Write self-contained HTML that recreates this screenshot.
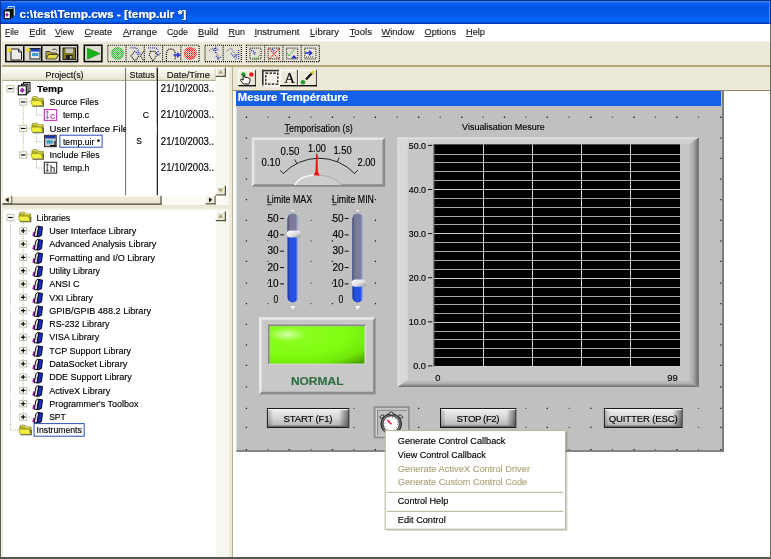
<!DOCTYPE html>
<html>
<head>
<meta charset="utf-8">
<title>c:\test\Temp.cws - [temp.uir *]</title>
<style>
*{box-sizing:border-box;margin:0;padding:0}
html,body{width:771px;height:559px;overflow:hidden;background:#fff}
body{font-family:"Liberation Sans","DejaVu Sans",sans-serif;font-size:9.5px;color:#000;position:relative}
.abs{position:absolute}
#titlebar{left:0;top:0;width:771px;height:23.5px;background:linear-gradient(#002a86 0,#002e90 4%,#3a80ee 6%,#1a6af0 10%,#085cec 17%,#0354e4 38%,#0558ea 62%,#0668f8 86%,#0452de 93%,#003cb6 97%,#0030a0 100%)}
#menubar{left:0;top:23.5px;width:771px;height:17.5px;background:#fff}
#toolbar{left:0;top:41px;width:771px;height:25px;background:#ece9d8;border-top:1px solid #f6f4ea}
#sep1{left:0;top:65.4px;width:771px;height:1.4px;background:#b4a77c}
#toolrow{left:0;top:66.8px;width:771px;height:23.4px;background:#ece9d8}
#leftframe{left:0;top:66.8px;width:233px;height:492px;background:#ece9d8}
#split{left:226px;top:66.8px;width:3px;height:492px;background:#f8f7f0}
#splitl{left:232.2px;top:66.8px;width:1px;height:492px;background:#b8b08c}
#proj{left:2.5px;top:67.4px;width:223.5px;height:137.4px;background:#fff}
#hsplit{left:0;top:204.8px;width:229px;height:4.8px;background:linear-gradient(#e8e5d2 0,#ece9d8 50%,#f6f4ea 100%)}
#lib{left:2.5px;top:209.6px;width:223.5px;height:348px;background:#fff}
#right{left:233px;top:90.2px;width:538px;height:469px;background:#fff;border-top:1px solid #8a8670}
#panel{left:235.6px;top:90.6px;width:488.2px;height:361px;background:#c0c0c0;border-right:2.6px solid #7e7e7e;border-bottom:2px solid #868686;border-left:1px solid #dcdcdc}
#ptitle{left:235.8px;top:90.6px;width:485.4px;height:15.2px;background:#1460e6}
#bl{left:0;top:23.5px;width:1.2px;height:536px;background:#5a5a50}
#blt{left:0;top:0;width:1.2px;height:23.5px;background:#0a2e94}
#brt{left:769.8px;top:0;width:1.2px;height:23.5px;background:#0a2e94}
#brt2{left:768.6px;top:1px;width:1.2px;height:22px;background:#4a8cf0}
#bl2{left:1.2px;top:23.5px;width:1.3px;height:534px;background:#f4f2e8}
#bb{left:0;top:557.2px;width:771px;height:1.8px;background:#585850}
#br{left:769.8px;top:23.5px;width:1.2px;height:536px;background:#6a6a60}
svg{position:absolute;left:0;top:0;will-change:transform}
svg text{font-family:"Liberation Sans","DejaVu Sans",sans-serif;white-space:pre;stroke-width:0.15px}
</style>
</head>
<body>
<div class="abs" id="titlebar"></div>
<div class="abs" id="menubar"></div>
<div class="abs" id="toolbar"></div>
<div class="abs" id="sep1"></div>
<div class="abs" id="toolrow"></div>
<div class="abs" id="leftframe"></div>
<div class="abs" id="split"></div>
<div class="abs" id="splitl"></div>
<div class="abs" id="proj"></div>
<div class="abs" id="hsplit"></div>
<div class="abs" id="lib"></div>
<div class="abs" id="right"></div>
<div class="abs" id="panel"></div>
<div class="abs" id="ptitle"></div>
<svg width="771" height="559" viewBox="0 0 771 559">
<defs>
<filter id="ts" x="-5%" y="-30%" width="110%" height="170%"><feDropShadow dx="0.8" dy="0.8" stdDeviation="0.25" flood-color="#0a2a80" flood-opacity="0.75"/></filter>
<pattern id="chk" x="0.6" y="0.2" width="2" height="2" patternUnits="userSpaceOnUse"><rect width="2" height="2" fill="#ececec"/><rect width="1" height="1" fill="#3a3a3a"/><rect x="1" y="1" width="1" height="1" fill="#3a3a3a"/></pattern>
<pattern id="dgr" width="2" height="2" patternUnits="userSpaceOnUse"><rect width="2" height="2" fill="#b4e0ac"/><rect width="1" height="1" fill="#28b030"/><rect x="1" y="1" width="1" height="1" fill="#28b030"/></pattern>
<pattern id="drd" width="2" height="2" patternUnits="userSpaceOnUse"><rect width="2" height="2" fill="#f0b8b0"/><rect width="1" height="1" fill="#e82020"/><rect x="1" y="1" width="1" height="1" fill="#e82020"/></pattern>
<linearGradient id="hdr" x1="0" x2="0" y1="0" y2="1"><stop offset="0" stop-color="#ffffff"/><stop offset="0.3" stop-color="#f8f7ee"/><stop offset="0.6" stop-color="#f0eee0"/><stop offset="1" stop-color="#e6e2ce"/></linearGradient>
<linearGradient id="trk" x1="0" x2="1" y1="0" y2="0"><stop offset="0" stop-color="#000" stop-opacity="0.45"/><stop offset="0.18" stop-color="#000" stop-opacity="0.05"/><stop offset="0.8" stop-color="#fff" stop-opacity="0"/><stop offset="1" stop-color="#fff" stop-opacity="0.55"/></linearGradient>
<linearGradient id="thm" x1="0" x2="1" y1="0" y2="1"><stop offset="0" stop-color="#ffffff"/><stop offset="0.55" stop-color="#e0e0e4"/><stop offset="1" stop-color="#8c8c96"/></linearGradient>
<radialGradient id="led" cx="0.25" cy="0.2" r="1.05"><stop offset="0" stop-color="#8eff24"/><stop offset="0.55" stop-color="#80fc10"/><stop offset="0.8" stop-color="#70e808"/><stop offset="1" stop-color="#4aa400"/></radialGradient>
<radialGradient id="ledhi"><stop offset="0" stop-color="#fff" stop-opacity="0.6"/><stop offset="1" stop-color="#fff" stop-opacity="0"/></radialGradient>
<linearGradient id="btn" x1="0" x2="0" y1="0" y2="1"><stop offset="0" stop-color="#f0f0f0"/><stop offset="0.5" stop-color="#d6d6d6"/><stop offset="1" stop-color="#b0b0b0"/></linearGradient>
<linearGradient id="btnh" x1="0" x2="1" y1="0" y2="0"><stop offset="0" stop-color="#000" stop-opacity="0.22"/><stop offset="0.07" stop-color="#000" stop-opacity="0"/><stop offset="0.88" stop-color="#000" stop-opacity="0"/><stop offset="1" stop-color="#000" stop-opacity="0.5"/></linearGradient>
<linearGradient id="gl" x1="0" x2="1" y1="0" y2="0"><stop offset="0" stop-color="#f4f4f4"/><stop offset="1" stop-color="#c8c8c8"/></linearGradient>
<linearGradient id="gr" x1="0" x2="1" y1="0" y2="0"><stop offset="0" stop-color="#c6c6c6"/><stop offset="0.5" stop-color="#a8a8a8"/><stop offset="1" stop-color="#626262"/></linearGradient>
<linearGradient id="gb" x1="0" x2="0" y1="0" y2="1"><stop offset="0" stop-color="#c6c6c6"/><stop offset="0.5" stop-color="#b0b0b0"/><stop offset="1" stop-color="#6e6e6e"/></linearGradient>
</defs>
<text x="237.8" y="101" font-size="10.4" font-weight="bold" fill="#fff" stroke="#fff" textLength="110.2" lengthAdjust="spacingAndGlyphs">Mesure Température</text>
<path d="M8 15.5 V6.6 H14.4 V15.5" fill="none" stroke="#e8f0ff" stroke-width="0.9" />
<rect x="6.20" y="8.30" width="7.00" height="9.40" fill="#101010" />
<path d="M6.2 8.5 H12.8" fill="none" stroke="#d8c8c0" stroke-width="0.8" />
<rect x="4.30" y="10.90" width="6.00" height="7.80" fill="#fff" stroke="#000" stroke-width="1.1"/>
<path d="M5.2 14.8 L7 12.6 L8.8 14.8 L7 17 Z" fill="#a018b8" />
<g filter="url(#ts)">
<text x="19.4" y="18.0" font-size="10.8" textLength="166.8" lengthAdjust="spacingAndGlyphs" fill="#fff" stroke="#fff" font-weight="bold">c:\test\Temp.cws - [temp.uir *]</text>
</g>
<text x="5.0" y="34.8" font-size="9.3" textLength="13.7" lengthAdjust="spacingAndGlyphs" fill="#1c1c1c" stroke="#1c1c1c">File</text>
<line x1="5.00" y1="36.50" x2="10.00" y2="36.50" stroke="#222" stroke-width="0.9" />
<text x="29.3" y="34.8" font-size="9.3" textLength="16.2" lengthAdjust="spacingAndGlyphs" fill="#1c1c1c" stroke="#1c1c1c">Edit</text>
<line x1="29.30" y1="36.50" x2="34.80" y2="36.50" stroke="#222" stroke-width="0.9" />
<text x="55.0" y="34.8" font-size="9.3" textLength="19.0" lengthAdjust="spacingAndGlyphs" fill="#1c1c1c" stroke="#1c1c1c">View</text>
<line x1="55.00" y1="36.50" x2="61.00" y2="36.50" stroke="#222" stroke-width="0.9" />
<text x="84.5" y="34.8" font-size="9.3" textLength="27.5" lengthAdjust="spacingAndGlyphs" fill="#1c1c1c" stroke="#1c1c1c">Create</text>
<line x1="84.50" y1="36.50" x2="91.00" y2="36.50" stroke="#222" stroke-width="0.9" />
<text x="123.0" y="34.8" font-size="9.3" textLength="34.0" lengthAdjust="spacingAndGlyphs" fill="#1c1c1c" stroke="#1c1c1c">Arrange</text>
<line x1="123.00" y1="36.50" x2="129.50" y2="36.50" stroke="#222" stroke-width="0.9" />
<text x="167.0" y="34.8" font-size="9.3" textLength="21.0" lengthAdjust="spacingAndGlyphs" fill="#1c1c1c" stroke="#1c1c1c">Code</text>
<line x1="172.51" y1="36.50" x2="177.51" y2="36.50" stroke="#222" stroke-width="0.9" />
<text x="198.0" y="34.8" font-size="9.3" textLength="20.5" lengthAdjust="spacingAndGlyphs" fill="#1c1c1c" stroke="#1c1c1c">Build</text>
<line x1="198.00" y1="36.50" x2="204.00" y2="36.50" stroke="#222" stroke-width="0.9" />
<text x="228.6" y="34.8" font-size="9.3" textLength="16.4" lengthAdjust="spacingAndGlyphs" fill="#1c1c1c" stroke="#1c1c1c">Run</text>
<line x1="228.60" y1="36.50" x2="235.10" y2="36.50" stroke="#222" stroke-width="0.9" />
<text x="254.4" y="34.8" font-size="9.3" textLength="45.0" lengthAdjust="spacingAndGlyphs" fill="#1c1c1c" stroke="#1c1c1c">Instrument</text>
<line x1="254.40" y1="36.50" x2="256.90" y2="36.50" stroke="#222" stroke-width="0.9" />
<text x="310.0" y="34.8" font-size="9.3" textLength="29.0" lengthAdjust="spacingAndGlyphs" fill="#1c1c1c" stroke="#1c1c1c">Library</text>
<line x1="310.00" y1="36.50" x2="315.00" y2="36.50" stroke="#222" stroke-width="0.9" />
<text x="349.5" y="34.8" font-size="9.3" textLength="22.5" lengthAdjust="spacingAndGlyphs" fill="#1c1c1c" stroke="#1c1c1c">Tools</text>
<line x1="349.50" y1="36.50" x2="355.00" y2="36.50" stroke="#222" stroke-width="0.9" />
<text x="381.5" y="34.8" font-size="9.3" textLength="33.0" lengthAdjust="spacingAndGlyphs" fill="#1c1c1c" stroke="#1c1c1c">Window</text>
<line x1="381.50" y1="36.50" x2="390.50" y2="36.50" stroke="#222" stroke-width="0.9" />
<text x="424.6" y="34.8" font-size="9.3" textLength="31.4" lengthAdjust="spacingAndGlyphs" fill="#1c1c1c" stroke="#1c1c1c">Options</text>
<line x1="424.60" y1="36.50" x2="431.60" y2="36.50" stroke="#222" stroke-width="0.9" />
<text x="466.0" y="34.8" font-size="9.3" textLength="19.0" lengthAdjust="spacingAndGlyphs" fill="#1c1c1c" stroke="#1c1c1c">Help</text>
<line x1="466.00" y1="36.50" x2="472.50" y2="36.50" stroke="#222" stroke-width="0.9" />
<rect x="5.80" y="45.20" width="71.80" height="16.40" fill="#dedbcf" stroke="#000" stroke-width="1.5"/>
<line x1="23.75" y1="45.20" x2="23.75" y2="61.60" stroke="#000" stroke-width="1.5" />
<line x1="41.70" y1="45.20" x2="41.70" y2="61.60" stroke="#000" stroke-width="1.5" />
<line x1="59.65" y1="45.20" x2="59.65" y2="61.60" stroke="#000" stroke-width="1.5" />
<path d="M11 49 H18.5 L21.5 52 V60 H11 Z" fill="#ecebe6" stroke="#222" stroke-width="1" />
<path d="M18.5 49 V52 H21.5" fill="none" stroke="#222" stroke-width="0.9" />
<path d="M9.5 46.5 L10.5 49 L13 50 L10.5 51 L9.5 53.5 L8.5 51 L6.5 50 L8.5 49 Z" fill="#f0d820" />
<rect x="30.00" y="48.50" width="10.00" height="10.50" fill="#e8e8e8" stroke="#222" stroke-width="1"/>
<rect x="30.50" y="49.00" width="9.00" height="2.60" fill="#1840c0" />
<rect x="32.00" y="53.00" width="6.50" height="3.00" fill="#40a0d0" />
<path d="M28 46.5 L29 49 L31.5 50 L29 51 L28 53.5 L27 51 L25 50 L27 49 Z" fill="#f0d820" />
<path d="M46 59 V51.5 H50 L51 53 H56.5 V55" fill="#b8a830" stroke="#333" stroke-width="0.9" />
<path d="M46 59 L48.5 54.5 H58.5 L56 59 Z" fill="#e8d840" stroke="#333" stroke-width="0.9" />
<path d="M52 50 Q55 47.5 57 50.5" fill="none" stroke="#333" stroke-width="0.9" />
<rect x="63.00" y="48.00" width="12.50" height="11.50" fill="#807818" stroke="#222" stroke-width="1"/>
<rect x="65.50" y="48.50" width="7.50" height="4.50" fill="#c8c8c8" />
<rect x="66.00" y="55.00" width="6.50" height="4.50" fill="#202020" />
<rect x="70.00" y="56.00" width="1.60" height="2.60" fill="#c8c8c8" />
<rect x="84.30" y="45.20" width="17.60" height="16.40" fill="#dedbcf" stroke="#000" stroke-width="1.5"/>
<path d="M87.5 48.3 L100 53.6 L87.5 59.2 Z" fill="#18b418" stroke="#0a8a0a" stroke-width="0.6" />
<rect x="107.80" y="45.20" width="91.30" height="16.40" fill="#e6e3d4" stroke="#000" stroke-width="1.1" stroke-dasharray="1 1"/>
<line x1="126.06" y1="45.20" x2="126.06" y2="61.60" stroke="#000" stroke-width="1.1" stroke-dasharray="1 1"/>
<line x1="144.32" y1="45.20" x2="144.32" y2="61.60" stroke="#000" stroke-width="1.1" stroke-dasharray="1 1"/>
<line x1="162.58" y1="45.20" x2="162.58" y2="61.60" stroke="#000" stroke-width="1.1" stroke-dasharray="1 1"/>
<line x1="180.84" y1="45.20" x2="180.84" y2="61.60" stroke="#000" stroke-width="1.1" stroke-dasharray="1 1"/>
<rect x="205.00" y="45.20" width="36.30" height="16.40" fill="#e6e3d4" stroke="#000" stroke-width="1.1" stroke-dasharray="1 1"/>
<line x1="223.15" y1="45.20" x2="223.15" y2="61.60" stroke="#000" stroke-width="1.1" stroke-dasharray="1 1"/>
<rect x="246.40" y="45.20" width="73.00" height="16.40" fill="#e6e3d4" stroke="#000" stroke-width="1.1" stroke-dasharray="1 1"/>
<line x1="264.65" y1="45.20" x2="264.65" y2="61.60" stroke="#000" stroke-width="1.1" stroke-dasharray="1 1"/>
<line x1="282.90" y1="45.20" x2="282.90" y2="61.60" stroke="#000" stroke-width="1.1" stroke-dasharray="1 1"/>
<line x1="301.15" y1="45.20" x2="301.15" y2="61.60" stroke="#000" stroke-width="1.1" stroke-dasharray="1 1"/>
<circle cx="117.6" cy="53.4" r="6.4" fill="url(#dgr)"/>
<circle cx="117.6" cy="53.4" r="3" fill="none" stroke="#d8f0d0" stroke-width="1" stroke-dasharray="1 1"/>
<path d="M130.5 47.8 H135 Q138.4 48.2 138.4 53" fill="none" stroke="#2030d0" stroke-width="1.3" stroke-dasharray="1 1"/>
<path d="M136 52 L138.4 55 L140.8 52" fill="none" stroke="#2030d0" stroke-width="1.3" stroke-dasharray="1 1"/>
<path d="M135 51 L131 56 L135 61 L139 56 M144 51 L140.4 56 L144 61" fill="none" stroke="#111" stroke-width="1.2" stroke-dasharray="1 1"/>
<path d="M148 47.8 H155 Q158.4 48.2 158.4 53" fill="none" stroke="#2030d0" stroke-width="1.3" stroke-dasharray="1 1"/>
<path d="M156 52.4 L158.4 55.4 L160.8 52.4" fill="none" stroke="#2030d0" stroke-width="1.3" stroke-dasharray="1 1"/>
<path d="M150.5 51.4 H155 L157 55 L153 61 L149 55 Z" fill="none" stroke="#111" stroke-width="1.2" stroke-dasharray="1 1"/>
<path d="M166.4 61 V54.4 Q166.4 49 170.8 49 Q175.2 49 175.2 54.4 V60" fill="none" stroke="#111" stroke-width="1.3" stroke-dasharray="1 1"/>
<path d="M173.5 55 H179 M177 52.8 L179.6 55 L177 57.2" fill="none" stroke="#2030d0" stroke-width="1.3" />
<circle cx="190.4" cy="53.4" r="6.5" fill="url(#drd)"/>
<line x1="185.00" y1="52.00" x2="196.00" y2="52.00" stroke="#f4e4dc" stroke-width="1" stroke-dasharray="1.5 1"/>
<line x1="185.00" y1="54.80" x2="196.00" y2="54.80" stroke="#f4e4dc" stroke-width="1" stroke-dasharray="1.5 1"/>
<path d="M209 51 L213 48 L219 57 L217 60.5" fill="none" stroke="#6c6c88" stroke-width="1.3" stroke-dasharray="1 1"/>
<path d="M213 50.6 L215.6 47.4 L218.4 50.6 M215.6 48 V53" fill="none" stroke="#2030d0" stroke-width="1.3" stroke-dasharray="1 1"/>
<path d="M216 56 L218.6 59 L221.4 56" fill="none" stroke="#2030d0" stroke-width="1.2" stroke-dasharray="1 1"/>
<path d="M227 51 L231 48 L237 57 L235 60.5" fill="none" stroke="#6c6c88" stroke-width="1.3" stroke-dasharray="1 1"/>
<path d="M231 53.4 L234.4 57 L238 53.4 M238.6 50 V59" fill="none" stroke="#2030d0" stroke-width="1.3" stroke-dasharray="1 1"/>
<rect x="249.90" y="48.20" width="11.20" height="10.60" fill="none" stroke="#333" stroke-width="1.2" stroke-dasharray="1 1"/>
<rect x="268.20" y="48.20" width="11.20" height="10.60" fill="none" stroke="#333" stroke-width="1.2" stroke-dasharray="1 1"/>
<rect x="286.50" y="48.20" width="11.20" height="10.60" fill="none" stroke="#333" stroke-width="1.2" stroke-dasharray="1 1"/>
<rect x="304.70" y="48.20" width="11.20" height="10.60" fill="none" stroke="#333" stroke-width="1.2" stroke-dasharray="1 1"/>
<path d="M251.4 50 L255.4 53 L253.4 55" fill="none" stroke="#2030d0" stroke-width="1.6" stroke-dasharray="1 1"/>
<path d="M254 57.6 L256 59.6 L260 55" fill="none" stroke="#30a030" stroke-width="1.3" stroke-dasharray="1 1"/>
<path d="M268.4 48 L279.6 60 M279.6 48 L268.4 60" fill="none" stroke="#e02828" stroke-width="1.4" stroke-dasharray="1 1"/>
<path d="M272 49 L275 52" fill="none" stroke="#2030d0" stroke-width="1.6" stroke-dasharray="1 1"/>
<path d="M287 53 L289 56 L294.4 49" fill="none" stroke="#30a030" stroke-width="1.3" stroke-dasharray="1 1"/>
<path d="M291 58.4 L294 55 L297 58.4 Z" fill="#2030d0" />
<path d="M305 53 H311 M309 50.8 L311.6 53 L309 55.2" fill="none" stroke="#2030d0" stroke-width="1.5" />
<path d="M306 57 H313" fill="none" stroke="#333" stroke-width="1" stroke-dasharray="1 1"/>
<rect x="2.00" y="67.00" width="124.00" height="14.00" fill="url(#hdr)" />
<rect x="2.00" y="79.90" width="124.00" height="1.10" fill="#b4ae94" />
<line x1="125.50" y1="68.50" x2="125.50" y2="79.50" stroke="#c2bca2" stroke-width="1" />
<text x="45.5" y="77.6" font-size="9.5" textLength="38.1" lengthAdjust="spacingAndGlyphs" fill="#111" stroke="#111">Project(s)</text>
<rect x="126.00" y="67.00" width="31.40" height="14.00" fill="url(#hdr)" />
<rect x="126.00" y="79.90" width="31.40" height="1.10" fill="#b4ae94" />
<line x1="156.90" y1="68.50" x2="156.90" y2="79.50" stroke="#c2bca2" stroke-width="1" />
<text x="129.6" y="77.6" font-size="9.5" textLength="25.0" lengthAdjust="spacingAndGlyphs" fill="#111" stroke="#111">Status</text>
<rect x="157.40" y="67.00" width="58.40" height="14.00" fill="url(#hdr)" />
<rect x="157.40" y="79.90" width="58.40" height="1.10" fill="#b4ae94" />
<line x1="215.30" y1="68.50" x2="215.30" y2="79.50" stroke="#c2bca2" stroke-width="1" />
<text x="166.7" y="77.6" font-size="9.5" textLength="43.3" lengthAdjust="spacingAndGlyphs" fill="#111" stroke="#111">Date/Time</text>
<line x1="125.60" y1="67.60" x2="125.60" y2="195.60" stroke="#6a6a6a" stroke-width="1" />
<line x1="157.30" y1="67.60" x2="157.30" y2="195.60" stroke="#000" stroke-width="1.1" />
<rect x="215.80" y="67.60" width="10.20" height="128.00" fill="#f7f6ef" />
<rect x="215.80" y="67.60" width="10.20" height="9.40" fill="#ece9d8" />
<rect x="215.80" y="67.60" width="10.20" height="1.00" fill="#fff" />
<rect x="215.80" y="67.60" width="1.00" height="9.40" fill="#fff" />
<rect x="215.80" y="75.80" width="10.20" height="1.20" fill="#55503e" />
<rect x="224.80" y="67.60" width="1.20" height="9.40" fill="#55503e" />
<path d="M218.0 73.6 L220.6 70.0 L223.2 73.6 Z" fill="#a8a078" />
<rect x="215.80" y="185.80" width="10.20" height="9.80" fill="#ece9d8" />
<rect x="215.80" y="185.80" width="10.20" height="1.00" fill="#fff" />
<rect x="215.80" y="185.80" width="1.00" height="9.80" fill="#fff" />
<rect x="215.80" y="194.40" width="10.20" height="1.20" fill="#55503e" />
<rect x="224.80" y="185.80" width="1.20" height="9.80" fill="#55503e" />
<path d="M218.0 188.8 L220.6 192.4 L223.2 188.8 Z" fill="#a8a078" />
<rect x="2.50" y="195.80" width="213.30" height="8.60" fill="#fbfaf5" />
<rect x="2.50" y="195.80" width="10.00" height="8.60" fill="#ece9d8" />
<rect x="2.50" y="195.80" width="10.00" height="1.00" fill="#fff" />
<rect x="2.50" y="195.80" width="1.00" height="8.60" fill="#fff" />
<rect x="2.50" y="203.20" width="10.00" height="1.20" fill="#55503e" />
<rect x="11.30" y="195.80" width="1.20" height="8.60" fill="#55503e" />
<path d="M8.6 197.4 L5.4 199.8 L8.6 202.20000000000002 Z" fill="#000" />
<rect x="205.60" y="195.80" width="10.20" height="8.60" fill="#ece9d8" />
<rect x="205.60" y="195.80" width="10.20" height="1.00" fill="#fff" />
<rect x="205.60" y="195.80" width="1.00" height="8.60" fill="#fff" />
<rect x="205.60" y="203.20" width="10.20" height="1.20" fill="#55503e" />
<rect x="214.60" y="195.80" width="1.20" height="8.60" fill="#55503e" />
<path d="M208.99999999999997 197.4 L212.2 199.8 L208.99999999999997 202.20000000000002 Z" fill="#000" />
<rect x="12.60" y="195.80" width="149.00" height="8.60" fill="#ece9d8" />
<rect x="12.60" y="195.80" width="149.00" height="1.00" fill="#fff" />
<rect x="12.60" y="203.20" width="149.00" height="1.20" fill="#a09c88" />
<rect x="160.40" y="195.80" width="1.20" height="8.60" fill="#55503e" />
<rect x="215.80" y="195.80" width="10.20" height="8.60" fill="#fbfaf5" />
<rect x="2.50" y="203.70" width="159.10" height="1.10" fill="#5c5642" />
<line x1="14.00" y1="88.60" x2="18.00" y2="88.60" stroke="#b0a888" stroke-width="0.9" stroke-dasharray="1 1.2"/>
<line x1="23.30" y1="105.65" x2="23.30" y2="151.65" stroke="#b0a888" stroke-width="0.9" stroke-dasharray="1 1.2"/>
<line x1="27.00" y1="101.85" x2="30.50" y2="101.85" stroke="#b0a888" stroke-width="0.9" stroke-dasharray="1 1.2"/>
<line x1="36.50" y1="107.15" x2="36.50" y2="115.10" stroke="#b0a888" stroke-width="0.9" stroke-dasharray="1 1.2"/>
<line x1="36.50" y1="115.10" x2="43.50" y2="115.10" stroke="#b0a888" stroke-width="0.9" stroke-dasharray="1 1.2"/>
<line x1="27.00" y1="128.35" x2="30.50" y2="128.35" stroke="#b0a888" stroke-width="0.9" stroke-dasharray="1 1.2"/>
<line x1="36.50" y1="133.65" x2="36.50" y2="141.60" stroke="#b0a888" stroke-width="0.9" stroke-dasharray="1 1.2"/>
<line x1="36.50" y1="141.60" x2="43.50" y2="141.60" stroke="#b0a888" stroke-width="0.9" stroke-dasharray="1 1.2"/>
<line x1="27.00" y1="154.85" x2="30.50" y2="154.85" stroke="#b0a888" stroke-width="0.9" stroke-dasharray="1 1.2"/>
<line x1="36.50" y1="160.15" x2="36.50" y2="168.10" stroke="#b0a888" stroke-width="0.9" stroke-dasharray="1 1.2"/>
<line x1="36.50" y1="168.10" x2="43.50" y2="168.10" stroke="#b0a888" stroke-width="0.9" stroke-dasharray="1 1.2"/>
<rect x="6.90" y="85.60" width="6.80" height="6.30" fill="#fff" stroke="#c4c0a8" stroke-width="1"/>
<line x1="8.10" y1="88.70" x2="12.50" y2="88.70" stroke="#000" stroke-width="1.2" />
<rect x="23.50" y="82.60" width="6.50" height="9.00" fill="#fff" stroke="#000" stroke-width="1"/>
<rect x="21.50" y="84.20" width="6.50" height="9.00" fill="#fff" stroke="#000" stroke-width="1"/>
<rect x="18.30" y="85.80" width="8.00" height="9.00" fill="#fff" stroke="#000" stroke-width="1.1"/>
<path d="M19.8 90.3 L22.3 87.6 L24.8 90.3 L22.3 93 Z" fill="#a020c0" />
<text x="37.0" y="91.9" font-size="9.8" textLength="26.2" lengthAdjust="spacingAndGlyphs" stroke="#000" font-weight="bold">Temp</text>
<text x="160.8" y="91.7" font-size="10" textLength="53.4" lengthAdjust="spacingAndGlyphs" stroke="#000">21/10/2003..</text>
<rect x="19.80" y="98.85" width="6.80" height="6.30" fill="#fff" stroke="#c4c0a8" stroke-width="1"/>
<line x1="21.00" y1="101.95" x2="25.40" y2="101.95" stroke="#000" stroke-width="1.2" />
<path d="M32.0 104.35000000000001 V97.75000000000001 L33.0 96.65 H37.0 L38.0 98.35000000000001 H43.2 V104.35000000000001 Z" fill="#a8a428" stroke="#7c7818" stroke-width="0.7" />
<path d="M32.800000000000004 97.65 H36.800000000000004 L37.800000000000004 99.15 H42.400000000000006" fill="none" stroke="#e8e460" stroke-width="1" />
<path d="M30.900000000000002 100.65 H41.0 L42.8 105.75000000000001 H32.4 Z" fill="#f0f040" stroke="#9c981c" stroke-width="0.6" />
<path d="M32.6 106.25000000000001 H43.400000000000006 V101.35000000000001" fill="none" stroke="#5c5c44" stroke-width="1.1" />
<text x="49.6" y="105.2" font-size="9.5" textLength="49.0" lengthAdjust="spacingAndGlyphs" stroke="#000">Source Files</text>
<rect x="19.80" y="125.35" width="6.80" height="6.30" fill="#fff" stroke="#c4c0a8" stroke-width="1"/>
<line x1="21.00" y1="128.45" x2="25.40" y2="128.45" stroke="#000" stroke-width="1.2" />
<path d="M32.0 130.85000000000002 V124.25000000000001 L33.0 123.15 H37.0 L38.0 124.85000000000001 H43.2 V130.85000000000002 Z" fill="#a8a428" stroke="#7c7818" stroke-width="0.7" />
<path d="M32.800000000000004 124.15 H36.800000000000004 L37.800000000000004 125.65 H42.400000000000006" fill="none" stroke="#e8e460" stroke-width="1" />
<path d="M30.900000000000002 127.15 H41.0 L42.8 132.25 H32.4 Z" fill="#f0f040" stroke="#9c981c" stroke-width="0.6" />
<path d="M32.6 132.75 H43.400000000000006 V127.85000000000001" fill="none" stroke="#5c5c44" stroke-width="1.1" />
<text x="49.6" y="131.7" font-size="9.5" textLength="83.4" lengthAdjust="spacingAndGlyphs" stroke="#000">User Interface Files</text>
<rect x="19.80" y="151.85" width="6.80" height="6.30" fill="#fff" stroke="#c4c0a8" stroke-width="1"/>
<line x1="21.00" y1="154.95" x2="25.40" y2="154.95" stroke="#000" stroke-width="1.2" />
<path d="M32.0 157.35 V150.75 L33.0 149.65 H37.0 L38.0 151.35 H43.2 V157.35 Z" fill="#a8a428" stroke="#7c7818" stroke-width="0.7" />
<path d="M32.800000000000004 150.65 H36.800000000000004 L37.800000000000004 152.15 H42.400000000000006" fill="none" stroke="#e8e460" stroke-width="1" />
<path d="M30.900000000000002 153.65 H41.0 L42.8 158.75 H32.4 Z" fill="#f0f040" stroke="#9c981c" stroke-width="0.6" />
<path d="M32.6 159.25 H43.400000000000006 V154.35" fill="none" stroke="#5c5c44" stroke-width="1.1" />
<text x="49.6" y="158.2" font-size="9.5" textLength="50.2" lengthAdjust="spacingAndGlyphs" stroke="#000">Include Files</text>
<rect x="44.30" y="109.60" width="12.40" height="10.80" fill="#fff" stroke="#c030c0" stroke-width="1.1"/>
<path d="M47.3 111 V118.6 M45.8 112.6 L47.3 111 L48.8 112.6 M45.8 117 L47.3 118.6 L48.8 117" fill="none" stroke="#c030c0" stroke-width="0.9" />
<text x="50.0" y="118.8" font-size="9" textLength="5.2" lengthAdjust="spacingAndGlyphs" fill="#c030c0" stroke="#c030c0">c</text>
<text x="62.9" y="118.4" font-size="9.5" textLength="26.3" lengthAdjust="spacingAndGlyphs" stroke="#000">temp.c</text>
<text x="142.8" y="117.6" font-size="9.3" textLength="6.2" lengthAdjust="spacingAndGlyphs" stroke="#000">C</text>
<text x="160.8" y="118.2" font-size="10" textLength="53.4" lengthAdjust="spacingAndGlyphs" stroke="#000">21/10/2003..</text>
<rect x="44.60" y="135.30" width="11.60" height="11.40" fill="#c8c8c8" stroke="#222" stroke-width="1"/>
<rect x="45.20" y="135.80" width="10.40" height="2.60" fill="#1838a8" />
<rect x="46.60" y="140.30" width="6.00" height="3.20" fill="#38a0c8" />
<path d="M55 141 V145.6 H50" fill="none" stroke="#000" stroke-width="1.1" />
<rect x="59.90" y="135.20" width="42.20" height="12.00" fill="#fff" stroke="#2a50b8" stroke-width="1"/>
<text x="62.9" y="144.9" font-size="9.5" textLength="37.2" lengthAdjust="spacingAndGlyphs" stroke="#000">temp.uir *</text>
<text x="136.2" y="144.1" font-size="9.3" textLength="5.6" lengthAdjust="spacingAndGlyphs" stroke="#000">S</text>
<text x="160.8" y="144.7" font-size="10" textLength="53.4" lengthAdjust="spacingAndGlyphs" stroke="#000">21/10/2003..</text>
<rect x="44.30" y="162.30" width="12.40" height="10.80" fill="#fff" stroke="#333" stroke-width="1.1"/>
<path d="M47.3 163.8 V171.4 M45.8 165.4 L47.3 163.8 L48.8 165.4 M45.8 169.8 L47.3 171.4 L48.8 169.8" fill="none" stroke="#333" stroke-width="0.9" />
<text x="50.0" y="171.6" font-size="9" textLength="5.2" lengthAdjust="spacingAndGlyphs" fill="#222" stroke="#222">h</text>
<text x="62.9" y="171.4" font-size="9.5" textLength="26.3" lengthAdjust="spacingAndGlyphs" stroke="#000">temp.h</text>
<text x="160.8" y="171.2" font-size="10" textLength="53.4" lengthAdjust="spacingAndGlyphs" stroke="#000">21/10/2003..</text>
<rect x="126.20" y="125.00" width="30.40" height="10.00" fill="#fff" />
<rect x="215.80" y="209.60" width="10.20" height="347.60" fill="#f7f6ef" />
<rect x="215.80" y="211.60" width="10.20" height="9.60" fill="#ece9d8" />
<rect x="215.80" y="211.60" width="10.20" height="1.00" fill="#fff" />
<rect x="215.80" y="211.60" width="1.00" height="9.60" fill="#fff" />
<rect x="215.80" y="220.00" width="10.20" height="1.20" fill="#55503e" />
<rect x="224.80" y="211.60" width="1.20" height="9.60" fill="#55503e" />
<path d="M218.0 217.7 L220.6 214.1 L223.2 217.7 Z" fill="#a8a078" />
<line x1="10.40" y1="221.70" x2="10.40" y2="430.20" stroke="#b0a888" stroke-width="0.9" stroke-dasharray="1 1.2"/>
<line x1="10.40" y1="430.20" x2="18.00" y2="430.20" stroke="#b0a888" stroke-width="0.9" stroke-dasharray="1 1.2"/>
<rect x="7.00" y="214.40" width="6.80" height="6.30" fill="#fff" stroke="#c4c0a8" stroke-width="1"/>
<line x1="8.20" y1="217.50" x2="12.60" y2="217.50" stroke="#000" stroke-width="1.2" />
<path d="M19.4 219.89999999999998 V213.29999999999998 L20.4 212.2 H24.4 L25.4 213.89999999999998 H30.6 V219.89999999999998 Z" fill="#a8a428" stroke="#7c7818" stroke-width="0.7" />
<path d="M20.2 213.2 H24.2 L25.2 214.7 H29.8" fill="none" stroke="#e8e460" stroke-width="1" />
<path d="M18.3 216.2 H28.4 L30.2 221.29999999999998 H19.8 Z" fill="#f0f040" stroke="#9c981c" stroke-width="0.6" />
<path d="M20 221.79999999999998 H30.8 V216.89999999999998" fill="none" stroke="#5c5c44" stroke-width="1.1" />
<text x="36.6" y="220.7" font-size="9.5" textLength="33.6" lengthAdjust="spacingAndGlyphs" stroke="#000">Libraries</text>
<line x1="23.20" y1="222.70" x2="23.20" y2="416.90" stroke="#b0a888" stroke-width="0.9" stroke-dasharray="1 1.2"/>
<line x1="26.50" y1="230.70" x2="31.00" y2="230.70" stroke="#b0a888" stroke-width="0.9" stroke-dasharray="1 1.2"/>
<rect x="19.80" y="227.70" width="6.80" height="6.30" fill="#fff" stroke="#c4c0a8" stroke-width="1"/>
<line x1="21.00" y1="230.80" x2="25.40" y2="230.80" stroke="#000" stroke-width="1.2" />
<line x1="23.20" y1="228.60" x2="23.20" y2="233.00" stroke="#000" stroke-width="1.2" />
<path d="M32.2 235.7 L33.6 231.5 L35.2 232.1 L34.4 236.3 Z" fill="#a818b8" />
<path d="M34.2 236.4 L35.9 227.5 L38 225.9 L38.9 226.5 L37.1 236.6 Z" fill="#dcdcdc" stroke="#000" stroke-width="0.9" />
<path d="M37.1 236.6 L38.9 226.4 L42.5 226.9 L41.5 235.5 L38.7 236.8 Z" fill="#1c2cc4" stroke="#000" stroke-width="0.9" />
<text x="49.2" y="234.0" font-size="9.5" textLength="87.1" lengthAdjust="spacingAndGlyphs" stroke="#000">User Interface Library</text>
<line x1="26.50" y1="244.00" x2="31.00" y2="244.00" stroke="#b0a888" stroke-width="0.9" stroke-dasharray="1 1.2"/>
<rect x="19.80" y="241.00" width="6.80" height="6.30" fill="#fff" stroke="#c4c0a8" stroke-width="1"/>
<line x1="21.00" y1="244.10" x2="25.40" y2="244.10" stroke="#000" stroke-width="1.2" />
<line x1="23.20" y1="241.90" x2="23.20" y2="246.30" stroke="#000" stroke-width="1.2" />
<path d="M32.2 248.99999999999997 L33.6 244.79999999999998 L35.2 245.39999999999998 L34.4 249.6 Z" fill="#a818b8" />
<path d="M34.2 249.7 L35.9 240.79999999999998 L38 239.2 L38.9 239.79999999999998 L37.1 249.89999999999998 Z" fill="#dcdcdc" stroke="#000" stroke-width="0.9" />
<path d="M37.1 249.89999999999998 L38.9 239.7 L42.5 240.2 L41.5 248.79999999999998 L38.7 250.1 Z" fill="#1c2cc4" stroke="#000" stroke-width="0.9" />
<text x="49.2" y="247.3" font-size="9.5" textLength="107.2" lengthAdjust="spacingAndGlyphs" stroke="#000">Advanced Analysis Library</text>
<line x1="26.50" y1="257.30" x2="31.00" y2="257.30" stroke="#b0a888" stroke-width="0.9" stroke-dasharray="1 1.2"/>
<rect x="19.80" y="254.30" width="6.80" height="6.30" fill="#fff" stroke="#c4c0a8" stroke-width="1"/>
<line x1="21.00" y1="257.40" x2="25.40" y2="257.40" stroke="#000" stroke-width="1.2" />
<line x1="23.20" y1="255.20" x2="23.20" y2="259.60" stroke="#000" stroke-width="1.2" />
<path d="M32.2 262.3 L33.6 258.1 L35.2 258.70000000000005 L34.4 262.90000000000003 Z" fill="#a818b8" />
<path d="M34.2 263.0 L35.9 254.10000000000002 L38 252.50000000000003 L38.9 253.10000000000002 L37.1 263.20000000000005 Z" fill="#dcdcdc" stroke="#000" stroke-width="0.9" />
<path d="M37.1 263.20000000000005 L38.9 253.00000000000003 L42.5 253.50000000000003 L41.5 262.1 L38.7 263.40000000000003 Z" fill="#1c2cc4" stroke="#000" stroke-width="0.9" />
<text x="49.2" y="260.6" font-size="9.5" textLength="105.8" lengthAdjust="spacingAndGlyphs" stroke="#000">Formatting and I/O Library</text>
<line x1="26.50" y1="270.60" x2="31.00" y2="270.60" stroke="#b0a888" stroke-width="0.9" stroke-dasharray="1 1.2"/>
<rect x="19.80" y="267.60" width="6.80" height="6.30" fill="#fff" stroke="#c4c0a8" stroke-width="1"/>
<line x1="21.00" y1="270.70" x2="25.40" y2="270.70" stroke="#000" stroke-width="1.2" />
<line x1="23.20" y1="268.50" x2="23.20" y2="272.90" stroke="#000" stroke-width="1.2" />
<path d="M32.2 275.59999999999997 L33.6 271.4 L35.2 272.0 L34.4 276.2 Z" fill="#a818b8" />
<path d="M34.2 276.29999999999995 L35.9 267.4 L38 265.79999999999995 L38.9 266.4 L37.1 276.5 Z" fill="#dcdcdc" stroke="#000" stroke-width="0.9" />
<path d="M37.1 276.5 L38.9 266.29999999999995 L42.5 266.79999999999995 L41.5 275.4 L38.7 276.7 Z" fill="#1c2cc4" stroke="#000" stroke-width="0.9" />
<text x="49.2" y="273.9" font-size="9.5" textLength="50.8" lengthAdjust="spacingAndGlyphs" stroke="#000">Utility Library</text>
<line x1="26.50" y1="283.90" x2="31.00" y2="283.90" stroke="#b0a888" stroke-width="0.9" stroke-dasharray="1 1.2"/>
<rect x="19.80" y="280.90" width="6.80" height="6.30" fill="#fff" stroke="#c4c0a8" stroke-width="1"/>
<line x1="21.00" y1="284.00" x2="25.40" y2="284.00" stroke="#000" stroke-width="1.2" />
<line x1="23.20" y1="281.80" x2="23.20" y2="286.20" stroke="#000" stroke-width="1.2" />
<path d="M32.2 288.9 L33.6 284.7 L35.2 285.3 L34.4 289.5 Z" fill="#a818b8" />
<path d="M34.2 289.59999999999997 L35.9 280.7 L38 279.09999999999997 L38.9 279.7 L37.1 289.8 Z" fill="#dcdcdc" stroke="#000" stroke-width="0.9" />
<path d="M37.1 289.8 L38.9 279.59999999999997 L42.5 280.09999999999997 L41.5 288.7 L38.7 290.0 Z" fill="#1c2cc4" stroke="#000" stroke-width="0.9" />
<text x="49.2" y="287.2" font-size="9.5" textLength="30.4" lengthAdjust="spacingAndGlyphs" stroke="#000">ANSI C</text>
<line x1="26.50" y1="297.20" x2="31.00" y2="297.20" stroke="#b0a888" stroke-width="0.9" stroke-dasharray="1 1.2"/>
<rect x="19.80" y="294.20" width="6.80" height="6.30" fill="#fff" stroke="#c4c0a8" stroke-width="1"/>
<line x1="21.00" y1="297.30" x2="25.40" y2="297.30" stroke="#000" stroke-width="1.2" />
<line x1="23.20" y1="295.10" x2="23.20" y2="299.50" stroke="#000" stroke-width="1.2" />
<path d="M32.2 302.2 L33.6 298.0 L35.2 298.6 L34.4 302.8 Z" fill="#a818b8" />
<path d="M34.2 302.9 L35.9 294.0 L38 292.4 L38.9 293.0 L37.1 303.1 Z" fill="#dcdcdc" stroke="#000" stroke-width="0.9" />
<path d="M37.1 303.1 L38.9 292.9 L42.5 293.4 L41.5 302.0 L38.7 303.3 Z" fill="#1c2cc4" stroke="#000" stroke-width="0.9" />
<text x="49.2" y="300.5" font-size="9.5" textLength="43.8" lengthAdjust="spacingAndGlyphs" stroke="#000">VXI Library</text>
<line x1="26.50" y1="310.50" x2="31.00" y2="310.50" stroke="#b0a888" stroke-width="0.9" stroke-dasharray="1 1.2"/>
<rect x="19.80" y="307.50" width="6.80" height="6.30" fill="#fff" stroke="#c4c0a8" stroke-width="1"/>
<line x1="21.00" y1="310.60" x2="25.40" y2="310.60" stroke="#000" stroke-width="1.2" />
<line x1="23.20" y1="308.40" x2="23.20" y2="312.80" stroke="#000" stroke-width="1.2" />
<path d="M32.2 315.5 L33.6 311.3 L35.2 311.90000000000003 L34.4 316.1 Z" fill="#a818b8" />
<path d="M34.2 316.2 L35.9 307.3 L38 305.7 L38.9 306.3 L37.1 316.40000000000003 Z" fill="#dcdcdc" stroke="#000" stroke-width="0.9" />
<path d="M37.1 316.40000000000003 L38.9 306.2 L42.5 306.7 L41.5 315.3 L38.7 316.6 Z" fill="#1c2cc4" stroke="#000" stroke-width="0.9" />
<text x="49.2" y="313.8" font-size="9.5" textLength="101.8" lengthAdjust="spacingAndGlyphs" stroke="#000">GPIB/GPIB 488.2 Library</text>
<line x1="26.50" y1="323.80" x2="31.00" y2="323.80" stroke="#b0a888" stroke-width="0.9" stroke-dasharray="1 1.2"/>
<rect x="19.80" y="320.80" width="6.80" height="6.30" fill="#fff" stroke="#c4c0a8" stroke-width="1"/>
<line x1="21.00" y1="323.90" x2="25.40" y2="323.90" stroke="#000" stroke-width="1.2" />
<line x1="23.20" y1="321.70" x2="23.20" y2="326.10" stroke="#000" stroke-width="1.2" />
<path d="M32.2 328.8 L33.6 324.6 L35.2 325.20000000000005 L34.4 329.40000000000003 Z" fill="#a818b8" />
<path d="M34.2 329.5 L35.9 320.6 L38 319.0 L38.9 319.6 L37.1 329.70000000000005 Z" fill="#dcdcdc" stroke="#000" stroke-width="0.9" />
<path d="M37.1 329.70000000000005 L38.9 319.5 L42.5 320.0 L41.5 328.6 L38.7 329.90000000000003 Z" fill="#1c2cc4" stroke="#000" stroke-width="0.9" />
<text x="49.2" y="327.1" font-size="9.5" textLength="60.3" lengthAdjust="spacingAndGlyphs" stroke="#000">RS-232 Library</text>
<line x1="26.50" y1="337.10" x2="31.00" y2="337.10" stroke="#b0a888" stroke-width="0.9" stroke-dasharray="1 1.2"/>
<rect x="19.80" y="334.10" width="6.80" height="6.30" fill="#fff" stroke="#c4c0a8" stroke-width="1"/>
<line x1="21.00" y1="337.20" x2="25.40" y2="337.20" stroke="#000" stroke-width="1.2" />
<line x1="23.20" y1="335.00" x2="23.20" y2="339.40" stroke="#000" stroke-width="1.2" />
<path d="M32.2 342.09999999999997 L33.6 337.9 L35.2 338.5 L34.4 342.7 Z" fill="#a818b8" />
<path d="M34.2 342.79999999999995 L35.9 333.9 L38 332.29999999999995 L38.9 332.9 L37.1 343.0 Z" fill="#dcdcdc" stroke="#000" stroke-width="0.9" />
<path d="M37.1 343.0 L38.9 332.79999999999995 L42.5 333.29999999999995 L41.5 341.9 L38.7 343.2 Z" fill="#1c2cc4" stroke="#000" stroke-width="0.9" />
<text x="49.2" y="340.4" font-size="9.5" textLength="50.0" lengthAdjust="spacingAndGlyphs" stroke="#000">VISA Library</text>
<line x1="26.50" y1="350.40" x2="31.00" y2="350.40" stroke="#b0a888" stroke-width="0.9" stroke-dasharray="1 1.2"/>
<rect x="19.80" y="347.40" width="6.80" height="6.30" fill="#fff" stroke="#c4c0a8" stroke-width="1"/>
<line x1="21.00" y1="350.50" x2="25.40" y2="350.50" stroke="#000" stroke-width="1.2" />
<line x1="23.20" y1="348.30" x2="23.20" y2="352.70" stroke="#000" stroke-width="1.2" />
<path d="M32.2 355.4 L33.6 351.2 L35.2 351.8 L34.4 356.0 Z" fill="#a818b8" />
<path d="M34.2 356.09999999999997 L35.9 347.2 L38 345.59999999999997 L38.9 346.2 L37.1 356.3 Z" fill="#dcdcdc" stroke="#000" stroke-width="0.9" />
<path d="M37.1 356.3 L38.9 346.09999999999997 L42.5 346.59999999999997 L41.5 355.2 L38.7 356.5 Z" fill="#1c2cc4" stroke="#000" stroke-width="0.9" />
<text x="49.2" y="353.7" font-size="9.5" textLength="81.8" lengthAdjust="spacingAndGlyphs" stroke="#000">TCP Support Library</text>
<line x1="26.50" y1="363.70" x2="31.00" y2="363.70" stroke="#b0a888" stroke-width="0.9" stroke-dasharray="1 1.2"/>
<rect x="19.80" y="360.70" width="6.80" height="6.30" fill="#fff" stroke="#c4c0a8" stroke-width="1"/>
<line x1="21.00" y1="363.80" x2="25.40" y2="363.80" stroke="#000" stroke-width="1.2" />
<line x1="23.20" y1="361.60" x2="23.20" y2="366.00" stroke="#000" stroke-width="1.2" />
<path d="M32.2 368.7 L33.6 364.5 L35.2 365.1 L34.4 369.3 Z" fill="#a818b8" />
<path d="M34.2 369.4 L35.9 360.5 L38 358.9 L38.9 359.5 L37.1 369.6 Z" fill="#dcdcdc" stroke="#000" stroke-width="0.9" />
<path d="M37.1 369.6 L38.9 359.4 L42.5 359.9 L41.5 368.5 L38.7 369.8 Z" fill="#1c2cc4" stroke="#000" stroke-width="0.9" />
<text x="49.2" y="367.0" font-size="9.5" textLength="78.2" lengthAdjust="spacingAndGlyphs" stroke="#000">DataSocket Library</text>
<line x1="26.50" y1="377.00" x2="31.00" y2="377.00" stroke="#b0a888" stroke-width="0.9" stroke-dasharray="1 1.2"/>
<rect x="19.80" y="374.00" width="6.80" height="6.30" fill="#fff" stroke="#c4c0a8" stroke-width="1"/>
<line x1="21.00" y1="377.10" x2="25.40" y2="377.10" stroke="#000" stroke-width="1.2" />
<line x1="23.20" y1="374.90" x2="23.20" y2="379.30" stroke="#000" stroke-width="1.2" />
<path d="M32.2 382.0 L33.6 377.8 L35.2 378.40000000000003 L34.4 382.6 Z" fill="#a818b8" />
<path d="M34.2 382.7 L35.9 373.8 L38 372.2 L38.9 372.8 L37.1 382.90000000000003 Z" fill="#dcdcdc" stroke="#000" stroke-width="0.9" />
<path d="M37.1 382.90000000000003 L38.9 372.7 L42.5 373.2 L41.5 381.8 L38.7 383.1 Z" fill="#1c2cc4" stroke="#000" stroke-width="0.9" />
<text x="49.2" y="380.3" font-size="9.5" textLength="82.6" lengthAdjust="spacingAndGlyphs" stroke="#000">DDE Support Library</text>
<line x1="26.50" y1="390.30" x2="31.00" y2="390.30" stroke="#b0a888" stroke-width="0.9" stroke-dasharray="1 1.2"/>
<rect x="19.80" y="387.30" width="6.80" height="6.30" fill="#fff" stroke="#c4c0a8" stroke-width="1"/>
<line x1="21.00" y1="390.40" x2="25.40" y2="390.40" stroke="#000" stroke-width="1.2" />
<line x1="23.20" y1="388.20" x2="23.20" y2="392.60" stroke="#000" stroke-width="1.2" />
<path d="M32.2 395.3 L33.6 391.1 L35.2 391.70000000000005 L34.4 395.90000000000003 Z" fill="#a818b8" />
<path d="M34.2 396.0 L35.9 387.1 L38 385.5 L38.9 386.1 L37.1 396.20000000000005 Z" fill="#dcdcdc" stroke="#000" stroke-width="0.9" />
<path d="M37.1 396.20000000000005 L38.9 386.0 L42.5 386.5 L41.5 395.1 L38.7 396.40000000000003 Z" fill="#1c2cc4" stroke="#000" stroke-width="0.9" />
<text x="49.2" y="393.6" font-size="9.5" textLength="61.2" lengthAdjust="spacingAndGlyphs" stroke="#000">ActiveX Library</text>
<line x1="26.50" y1="403.60" x2="31.00" y2="403.60" stroke="#b0a888" stroke-width="0.9" stroke-dasharray="1 1.2"/>
<rect x="19.80" y="400.60" width="6.80" height="6.30" fill="#fff" stroke="#c4c0a8" stroke-width="1"/>
<line x1="21.00" y1="403.70" x2="25.40" y2="403.70" stroke="#000" stroke-width="1.2" />
<line x1="23.20" y1="401.50" x2="23.20" y2="405.90" stroke="#000" stroke-width="1.2" />
<path d="M32.2 408.59999999999997 L33.6 404.4 L35.2 405.0 L34.4 409.2 Z" fill="#a818b8" />
<path d="M34.2 409.29999999999995 L35.9 400.4 L38 398.79999999999995 L38.9 399.4 L37.1 409.5 Z" fill="#dcdcdc" stroke="#000" stroke-width="0.9" />
<path d="M37.1 409.5 L38.9 399.29999999999995 L42.5 399.79999999999995 L41.5 408.4 L38.7 409.7 Z" fill="#1c2cc4" stroke="#000" stroke-width="0.9" />
<text x="49.2" y="406.9" font-size="9.5" textLength="89.3" lengthAdjust="spacingAndGlyphs" stroke="#000">Programmer's Toolbox</text>
<line x1="26.50" y1="416.90" x2="31.00" y2="416.90" stroke="#b0a888" stroke-width="0.9" stroke-dasharray="1 1.2"/>
<rect x="19.80" y="413.90" width="6.80" height="6.30" fill="#fff" stroke="#c4c0a8" stroke-width="1"/>
<line x1="21.00" y1="417.00" x2="25.40" y2="417.00" stroke="#000" stroke-width="1.2" />
<line x1="23.20" y1="414.80" x2="23.20" y2="419.20" stroke="#000" stroke-width="1.2" />
<path d="M32.2 421.9 L33.6 417.7 L35.2 418.3 L34.4 422.5 Z" fill="#a818b8" />
<path d="M34.2 422.59999999999997 L35.9 413.7 L38 412.09999999999997 L38.9 412.7 L37.1 422.8 Z" fill="#dcdcdc" stroke="#000" stroke-width="0.9" />
<path d="M37.1 422.8 L38.9 412.59999999999997 L42.5 413.09999999999997 L41.5 421.7 L38.7 423.0 Z" fill="#1c2cc4" stroke="#000" stroke-width="0.9" />
<text x="49.2" y="420.2" font-size="9.5" textLength="16.5" lengthAdjust="spacingAndGlyphs" stroke="#000">SPT</text>
<path d="M19.9 432.9 V426.29999999999995 L20.9 425.2 H24.9 L25.9 426.9 H31.1 V432.9 Z" fill="#a8a428" stroke="#7c7818" stroke-width="0.7" />
<path d="M20.7 426.2 H24.7 L25.7 427.7 H30.3" fill="none" stroke="#e8e460" stroke-width="1" />
<path d="M18.8 429.2 H28.9 L30.7 434.29999999999995 H20.3 Z" fill="#f0f040" stroke="#9c981c" stroke-width="0.6" />
<path d="M20.5 434.79999999999995 H31.3 V429.9" fill="none" stroke="#5c5c44" stroke-width="1.1" />
<rect x="34.00" y="423.60" width="50.20" height="12.60" fill="#fff" stroke="#2a50b8" stroke-width="1"/>
<text x="36.6" y="433.3" font-size="9.5" textLength="45.2" lengthAdjust="spacingAndGlyphs" stroke="#000">Instruments</text>
<rect x="238.40" y="69.80" width="17.60" height="16.60" fill="#ece9d8" />
<rect x="238.40" y="69.80" width="17.60" height="1.00" fill="#fff" />
<rect x="238.40" y="69.80" width="1.00" height="16.60" fill="#fff" />
<rect x="254.90" y="69.80" width="1.10" height="16.60" fill="#4a4a4a" />
<rect x="238.40" y="85.00" width="17.60" height="1.40" fill="#101010" />
<rect x="262.00" y="69.80" width="18.00" height="16.60" fill="#f6f4ec" />
<rect x="262.00" y="69.80" width="18.00" height="1.60" fill="#303030" />
<rect x="262.00" y="69.80" width="1.60" height="16.60" fill="#303030" />
<rect x="262.00" y="85.40" width="18.00" height="1.00" fill="#fff" />
<rect x="279.00" y="69.80" width="1.00" height="16.60" fill="#fff" />
<rect x="280.00" y="69.80" width="18.00" height="16.60" fill="#ece9d8" />
<rect x="280.00" y="69.80" width="18.00" height="1.00" fill="#fff" />
<rect x="280.00" y="69.80" width="1.00" height="16.60" fill="#fff" />
<rect x="296.90" y="69.80" width="1.10" height="16.60" fill="#4a4a4a" />
<rect x="280.00" y="85.00" width="18.00" height="1.40" fill="#101010" />
<rect x="298.00" y="69.80" width="19.00" height="16.60" fill="#ece9d8" />
<rect x="298.00" y="69.80" width="19.00" height="1.00" fill="#fff" />
<rect x="298.00" y="69.80" width="1.00" height="16.60" fill="#fff" />
<rect x="315.90" y="69.80" width="1.10" height="16.60" fill="#4a4a4a" />
<rect x="298.00" y="85.00" width="19.00" height="1.40" fill="#101010" />
<circle cx="243.3" cy="74.3" r="2.1" fill="#18a030"/>
<circle cx="251.4" cy="74.5" r="2.2" fill="#f01818"/>
<path d="M243.2 76 V80 L241.2 79 L240.6 80.2 L243.4 84 H248.8 L250 81 V78.6 L248.6 78 L247.4 77.6 L246 77.4 L244.8 77.4 V75.4 Z" fill="#fff" stroke="#000" stroke-width="0.9" />
<rect x="265.80" y="73.20" width="12.00" height="11.00" fill="none" stroke="#000" stroke-width="1.2" stroke-dasharray="2.4 1.4"/>
<text x="284.2" y="82.9" font-size="14" textLength="10.8" lengthAdjust="spacingAndGlyphs" stroke="#000" style="font-family:'Liberation Serif','DejaVu Serif',serif">A</text>
<line x1="312.80" y1="72.20" x2="306.00" y2="79.50" stroke="#101010" stroke-width="2.2" />
<line x1="314.20" y1="70.60" x2="311.40" y2="73.60" stroke="#e8d820" stroke-width="2" />
<circle cx="303" cy="82.2" r="2.3" fill="#20a030"/>
<path d="M267.2 116.6h1.3v1.3h-1.3zM267.2 199.0h1.3v1.3h-1.3zM267.2 219.7h1.3v1.3h-1.3zM267.2 240.2h1.3v1.3h-1.3zM267.2 260.8h1.3v1.3h-1.3zM267.2 282.4h1.3v1.3h-1.3zM267.2 303.0h1.3v1.3h-1.3zM267.2 449.0h1.3v1.3h-1.3zM310.4 116.6h1.3v1.3h-1.3zM310.4 199.0h1.3v1.3h-1.3zM310.4 219.7h1.3v1.3h-1.3zM310.4 240.2h1.3v1.3h-1.3zM310.4 260.8h1.3v1.3h-1.3zM310.4 282.4h1.3v1.3h-1.3zM310.4 303.0h1.3v1.3h-1.3zM310.4 449.0h1.3v1.3h-1.3zM353.2 116.6h1.3v1.3h-1.3zM353.2 199.0h1.3v1.3h-1.3zM353.2 407.8h1.3v1.3h-1.3zM353.2 426.8h1.3v1.3h-1.3zM353.2 449.0h1.3v1.3h-1.3zM396.4 116.6h1.3v1.3h-1.3zM396.4 449.0h1.3v1.3h-1.3zM439.6 116.6h1.3v1.3h-1.3zM439.6 449.0h1.3v1.3h-1.3zM482.6 116.6h1.3v1.3h-1.3zM482.6 449.0h1.3v1.3h-1.3zM525.2 116.6h1.3v1.3h-1.3zM525.2 407.8h1.3v1.3h-1.3zM525.2 426.8h1.3v1.3h-1.3zM525.2 449.0h1.3v1.3h-1.3zM568.4 116.6h1.3v1.3h-1.3zM568.4 407.8h1.3v1.3h-1.3zM568.4 426.8h1.3v1.3h-1.3zM568.4 449.0h1.3v1.3h-1.3zM611.8 116.6h1.3v1.3h-1.3zM611.8 449.0h1.3v1.3h-1.3zM654.8 116.6h1.3v1.3h-1.3zM654.8 449.0h1.3v1.3h-1.3zM697.8 116.6h1.3v1.3h-1.3zM697.8 407.8h1.3v1.3h-1.3zM697.8 426.8h1.3v1.3h-1.3zM697.8 449.0h1.3v1.3h-1.3z" fill="#5e5e5e" />
<path d="M245.8 116.6h1.3v1.3h-1.3zM245.8 137.4h1.3v1.3h-1.3zM245.8 157.8h1.3v1.3h-1.3zM245.8 178.4h1.3v1.3h-1.3zM245.8 199.0h1.3v1.3h-1.3zM245.8 219.7h1.3v1.3h-1.3zM245.8 240.2h1.3v1.3h-1.3zM245.8 260.8h1.3v1.3h-1.3zM245.8 282.4h1.3v1.3h-1.3zM245.8 303.0h1.3v1.3h-1.3zM245.8 323.7h1.3v1.3h-1.3zM245.8 344.2h1.3v1.3h-1.3zM245.8 364.8h1.3v1.3h-1.3zM245.8 386.2h1.3v1.3h-1.3zM245.8 407.8h1.3v1.3h-1.3zM245.8 426.8h1.3v1.3h-1.3zM245.8 449.0h1.3v1.3h-1.3zM288.6 116.6h1.3v1.3h-1.3zM288.6 199.0h1.3v1.3h-1.3zM288.6 449.0h1.3v1.3h-1.3zM331.8 116.6h1.3v1.3h-1.3zM331.8 199.0h1.3v1.3h-1.3zM331.8 219.7h1.3v1.3h-1.3zM331.8 240.2h1.3v1.3h-1.3zM331.8 260.8h1.3v1.3h-1.3zM331.8 282.4h1.3v1.3h-1.3zM331.8 303.0h1.3v1.3h-1.3zM331.8 449.0h1.3v1.3h-1.3zM374.8 116.6h1.3v1.3h-1.3zM374.8 199.0h1.3v1.3h-1.3zM374.8 219.7h1.3v1.3h-1.3zM374.8 240.2h1.3v1.3h-1.3zM374.8 260.8h1.3v1.3h-1.3zM374.8 282.4h1.3v1.3h-1.3zM374.8 303.0h1.3v1.3h-1.3zM374.8 449.0h1.3v1.3h-1.3zM418.0 116.6h1.3v1.3h-1.3zM418.0 407.8h1.3v1.3h-1.3zM418.0 426.8h1.3v1.3h-1.3zM418.0 449.0h1.3v1.3h-1.3zM461.2 116.6h1.3v1.3h-1.3zM461.2 449.0h1.3v1.3h-1.3zM503.8 116.6h1.3v1.3h-1.3zM503.8 449.0h1.3v1.3h-1.3zM546.6 116.6h1.3v1.3h-1.3zM546.6 407.8h1.3v1.3h-1.3zM546.6 426.8h1.3v1.3h-1.3zM546.6 449.0h1.3v1.3h-1.3zM590.2 116.6h1.3v1.3h-1.3zM590.2 407.8h1.3v1.3h-1.3zM590.2 426.8h1.3v1.3h-1.3zM590.2 449.0h1.3v1.3h-1.3zM633.4 116.6h1.3v1.3h-1.3zM633.4 449.0h1.3v1.3h-1.3zM676.2 116.6h1.3v1.3h-1.3zM676.2 449.0h1.3v1.3h-1.3zM720.2 116.6h1.3v1.3h-1.3zM720.2 137.4h1.3v1.3h-1.3zM720.2 157.8h1.3v1.3h-1.3zM720.2 178.4h1.3v1.3h-1.3zM720.2 199.0h1.3v1.3h-1.3zM720.2 219.7h1.3v1.3h-1.3zM720.2 240.2h1.3v1.3h-1.3zM720.2 260.8h1.3v1.3h-1.3zM720.2 282.4h1.3v1.3h-1.3zM720.2 303.0h1.3v1.3h-1.3zM720.2 323.7h1.3v1.3h-1.3zM720.2 344.2h1.3v1.3h-1.3zM720.2 364.8h1.3v1.3h-1.3zM720.2 386.2h1.3v1.3h-1.3zM720.2 407.8h1.3v1.3h-1.3zM720.2 426.8h1.3v1.3h-1.3zM720.2 449.0h1.3v1.3h-1.3z" fill="#1c1c1c" />
<text x="284.5" y="132.0" font-size="10.3" textLength="68.3" lengthAdjust="spacingAndGlyphs" stroke="#000">Temporisation (s)</text>
<line x1="284.50" y1="133.60" x2="289.50" y2="133.60" stroke="#222" stroke-width="0.9" />
<rect x="251.80" y="137.50" width="133.40" height="49.30" fill="#c8c8c8" />
<path d="M251.8 137.5 H385.2 L382.59999999999997 140.1 H254.4 V184.20000000000002 L251.8 186.8 Z" fill="#e6e6e6" />
<path d="M385.2 186.8 H251.8 L254.4 184.20000000000002 H382.59999999999997 V140.1 L385.2 137.5 Z" fill="#8a8a8a" />
<text x="261.6" y="165.6" font-size="10.6" textLength="18.6" lengthAdjust="spacingAndGlyphs" stroke="#000">0.10</text>
<text x="280.6" y="154.6" font-size="10.6" textLength="18.8" lengthAdjust="spacingAndGlyphs" stroke="#000">0.50</text>
<text x="308.0" y="151.8" font-size="10.6" textLength="17.9" lengthAdjust="spacingAndGlyphs" stroke="#000">1.00</text>
<text x="333.4" y="153.8" font-size="10.6" textLength="18.3" lengthAdjust="spacingAndGlyphs" stroke="#000">1.50</text>
<text x="357.5" y="165.6" font-size="10.6" textLength="18.0" lengthAdjust="spacingAndGlyphs" stroke="#000">2.00</text>
<path d="M283.46 173.47 A49.0 49.0 0 0 1 354.54 173.47" fill="none" stroke="#1c1c1c" stroke-width="0.95" />
<line x1="283.67" y1="173.68" x2="280.12" y2="170.30" stroke="#1c1c1c" stroke-width="0.95" />
<line x1="296.95" y1="163.78" x2="294.73" y2="159.41" stroke="#1c1c1c" stroke-width="0.95" />
<line x1="316.92" y1="158.54" x2="316.71" y2="153.65" stroke="#1c1c1c" stroke-width="0.95" />
<line x1="337.26" y1="162.05" x2="339.10" y2="157.51" stroke="#1c1c1c" stroke-width="0.95" />
<line x1="354.33" y1="173.68" x2="357.88" y2="170.30" stroke="#1c1c1c" stroke-width="0.95" />
<path d="M294.5 185 Q300 175.2 317 175 Q334 175.2 341.5 185 Z" fill="#cdcdcd" />
<path d="M294.5 185 Q300 175.2 316 175" fill="none" stroke="#fafafa" stroke-width="1.5" />
<path d="M319 175.2 Q334 175.6 341.5 185" fill="none" stroke="#a8a8a8" stroke-width="0.9" />
<path d="M316 154.5 L317.5 154.5 L317.9 171.5 L319.5 175.5 L313.6 175.5 L315.5 171.5 Z" fill="#f01010" />
<text x="266.9" y="203.1" font-size="10.3" textLength="45.3" lengthAdjust="spacingAndGlyphs" stroke="#000">Limite MAX</text>
<line x1="266.90" y1="204.70" x2="271.60" y2="204.70" stroke="#222" stroke-width="0.9" />
<text x="332.0" y="203.1" font-size="10.3" textLength="41.9" lengthAdjust="spacingAndGlyphs" stroke="#000">Limite MIN</text>
<line x1="332.00" y1="204.70" x2="336.70" y2="204.70" stroke="#222" stroke-width="0.9" />
<text x="267.4" y="221.6" font-size="10.4" textLength="11.2" lengthAdjust="spacingAndGlyphs" stroke="#000">50</text>
<line x1="280.10" y1="218.50" x2="284.10" y2="218.50" stroke="#111" stroke-width="1" />
<text x="267.4" y="237.9" font-size="10.4" textLength="11.2" lengthAdjust="spacingAndGlyphs" stroke="#000">40</text>
<line x1="280.10" y1="234.85" x2="284.10" y2="234.85" stroke="#111" stroke-width="1" />
<text x="267.4" y="254.3" font-size="10.4" textLength="11.2" lengthAdjust="spacingAndGlyphs" stroke="#000">30</text>
<line x1="280.10" y1="251.20" x2="284.10" y2="251.20" stroke="#111" stroke-width="1" />
<text x="267.4" y="270.6" font-size="10.4" textLength="11.2" lengthAdjust="spacingAndGlyphs" stroke="#000">20</text>
<line x1="280.10" y1="267.55" x2="284.10" y2="267.55" stroke="#111" stroke-width="1" />
<text x="267.4" y="287.0" font-size="10.4" textLength="11.2" lengthAdjust="spacingAndGlyphs" stroke="#000">10</text>
<line x1="280.10" y1="283.90" x2="284.10" y2="283.90" stroke="#111" stroke-width="1" />
<text x="273.4" y="302.8" font-size="10.4" textLength="4.8" lengthAdjust="spacingAndGlyphs" stroke="#000">0</text>
<rect x="287.60" y="213.8" width="10.2" height="88.8" rx="5.1" fill="#2450e4"/>
<clipPath id="c292"><rect x="287.60" y="213.8" width="10.2" height="20.10"/></clipPath>
<rect x="287.60" y="213.8" width="10.2" height="88.8" rx="5.1" fill="#7a7a9a" clip-path="url(#c292)"/>
<rect x="287.60" y="213.8" width="10.2" height="88.8" rx="5.1" fill="url(#trk)"/>
<path d="M288.9 212 L292.7 208.4 L296.5 212 Z" fill="#e8e8e8" stroke="#a0a0a0" stroke-width="0.6" />
<path d="M288.9 305.4 L292.7 310.4 L296.5 305.4 Z" fill="#f6f6f6" stroke="#a0a0a0" stroke-width="0.6" />
<rect x="286.70" y="230.40" width="14.5" height="7.2" rx="3.5" fill="url(#thm)"/>
<text x="332.4" y="221.6" font-size="10.4" textLength="11.2" lengthAdjust="spacingAndGlyphs" stroke="#000">50</text>
<line x1="344.70" y1="218.50" x2="348.70" y2="218.50" stroke="#111" stroke-width="1" />
<text x="332.4" y="237.9" font-size="10.4" textLength="11.2" lengthAdjust="spacingAndGlyphs" stroke="#000">40</text>
<line x1="344.70" y1="234.85" x2="348.70" y2="234.85" stroke="#111" stroke-width="1" />
<text x="332.4" y="254.3" font-size="10.4" textLength="11.2" lengthAdjust="spacingAndGlyphs" stroke="#000">30</text>
<line x1="344.70" y1="251.20" x2="348.70" y2="251.20" stroke="#111" stroke-width="1" />
<text x="332.4" y="270.6" font-size="10.4" textLength="11.2" lengthAdjust="spacingAndGlyphs" stroke="#000">20</text>
<line x1="344.70" y1="267.55" x2="348.70" y2="267.55" stroke="#111" stroke-width="1" />
<text x="332.4" y="287.0" font-size="10.4" textLength="11.2" lengthAdjust="spacingAndGlyphs" stroke="#000">10</text>
<line x1="344.70" y1="283.90" x2="348.70" y2="283.90" stroke="#111" stroke-width="1" />
<text x="338.4" y="302.8" font-size="10.4" textLength="4.8" lengthAdjust="spacingAndGlyphs" stroke="#000">0</text>
<rect x="352.50" y="213.8" width="10.2" height="88.8" rx="5.1" fill="#2450e4"/>
<clipPath id="c357"><rect x="352.50" y="213.8" width="10.2" height="69.20"/></clipPath>
<rect x="352.50" y="213.8" width="10.2" height="88.8" rx="5.1" fill="#7a7a9a" clip-path="url(#c357)"/>
<rect x="352.50" y="213.8" width="10.2" height="88.8" rx="5.1" fill="url(#trk)"/>
<path d="M353.8 212 L357.6 208.4 L361.40000000000003 212 Z" fill="#e8e8e8" stroke="#a0a0a0" stroke-width="0.6" />
<path d="M353.8 305.4 L357.6 310.4 L361.40000000000003 305.4 Z" fill="#f6f6f6" stroke="#a0a0a0" stroke-width="0.6" />
<rect x="351.60" y="279.50" width="14.5" height="7.2" rx="3.5" fill="url(#thm)"/>
<rect x="259.00" y="317.20" width="116.70" height="77.20" fill="#c8c8c8" />
<path d="M259 317.2 H375.7 L373.09999999999997 319.8 H261.6 V391.79999999999995 L259 394.4 Z" fill="#e9e9e9" />
<path d="M375.7 394.4 H259 L261.6 391.79999999999995 H373.09999999999997 V319.8 L375.7 317.2 Z" fill="#8c8c8c" />
<rect x="268.00" y="324.60" width="98.20" height="40.00" fill="#dcdcdc" />
<path d="M268 324.6 H366.2 L364.6 326.3 H269.7 V363.4 L268 364.6 Z" fill="#858585" />
<rect x="269.70" y="326.30" width="94.80" height="37.30" fill="url(#led)" />
<ellipse cx="287" cy="334.6" rx="19" ry="7" fill="url(#ledhi)"/>
<text x="290.9" y="385.4" font-size="11" textLength="52.6" lengthAdjust="spacingAndGlyphs" fill="#2e6e40" stroke="#2e6e40" font-weight="bold">NORMAL</text>
<rect x="266.90" y="408.00" width="82.40" height="20.00" fill="#1a1a1a" />
<rect x="267.90" y="409.00" width="80.40" height="18.00" fill="url(#btn)" />
<rect x="267.90" y="409.00" width="80.40" height="18.00" fill="url(#btnh)" />
<rect x="267.90" y="409.00" width="80.40" height="1.10" fill="#f6f6f6" />
<rect x="267.90" y="425.60" width="80.40" height="1.40" fill="#6a6a6a" />
<text x="283.5" y="421.5" font-size="9.6" textLength="49.0" lengthAdjust="spacing" stroke="#000">START (F1)</text>
<rect x="440.00" y="408.00" width="76.30" height="20.00" fill="#1a1a1a" />
<rect x="441.00" y="409.00" width="74.30" height="18.00" fill="url(#btn)" />
<rect x="441.00" y="409.00" width="74.30" height="18.00" fill="url(#btnh)" />
<rect x="441.00" y="409.00" width="74.30" height="1.10" fill="#f6f6f6" />
<rect x="441.00" y="425.60" width="74.30" height="1.40" fill="#6a6a6a" />
<text x="456.6" y="421.5" font-size="9.6" textLength="42.9" lengthAdjust="spacing" stroke="#000">STOP (F2)</text>
<rect x="603.90" y="408.00" width="78.70" height="20.00" fill="#1a1a1a" />
<rect x="604.90" y="409.00" width="76.70" height="18.00" fill="url(#btn)" />
<rect x="604.90" y="409.00" width="76.70" height="18.00" fill="url(#btnh)" />
<rect x="604.90" y="409.00" width="76.70" height="1.10" fill="#f6f6f6" />
<rect x="604.90" y="425.60" width="76.70" height="1.40" fill="#6a6a6a" />
<text x="608.8" y="421.5" font-size="9.6" textLength="68.8" lengthAdjust="spacing" stroke="#000">QUITTER (ESC)</text>
<rect x="373.60" y="406.20" width="36.20" height="32.20" fill="url(#chk)" />
<rect x="375.60" y="408.20" width="32.20" height="28.20" fill="#d2d2d2" />
<rect x="377.00" y="409.80" width="30.20" height="25.40" fill="#c2c2c2" />
<rect x="377.00" y="409.80" width="30.20" height="1.10" fill="#8c8c8c" />
<rect x="377.00" y="409.80" width="1.10" height="25.40" fill="#8c8c8c" />
<circle cx="391.2" cy="424" r="10.3" fill="#6c6c6c" stroke="#1c1c1c" stroke-width="1"/>
<circle cx="391.2" cy="424" r="8" fill="#fff" stroke="#2a2a2a" stroke-width="0.7"/>
<circle cx="391.2" cy="424" r="6.4" fill="none" stroke="#444" stroke-width="0.9" stroke-dasharray="0.8 2.55"/>
<path d="M388.8 415 Q388.8 412 391.2 412 Q393.6 412 393.6 415 Z" fill="#d8d8d8" stroke="#1c1c1c" stroke-width="0.9" />
<ellipse cx="381.8" cy="416.6" rx="2.2" ry="1.3" fill="#d0d0d0" stroke="#1c1c1c" stroke-width="0.8" transform="rotate(-40 381.8 416.6)"/>
<ellipse cx="400.6" cy="416.6" rx="2.2" ry="1.3" fill="#d0d0d0" stroke="#1c1c1c" stroke-width="0.8" transform="rotate(40 400.6 416.6)"/>
<line x1="391.40" y1="424.20" x2="387.40" y2="420.00" stroke="#e01030" stroke-width="1.5" />
<text x="462.1" y="129.5" font-size="9.6" textLength="82.6" lengthAdjust="spacingAndGlyphs" stroke="#000">Visualisation Mesure</text>
<rect x="397.60" y="137.60" width="301.20" height="249.40" fill="#c6c6c6" />
<rect x="397.60" y="137.60" width="301.20" height="6.80" fill="#d0d0d0" />
<rect x="397.60" y="137.60" width="10.20" height="249.40" fill="#d8d8d8" />
<rect x="397.60" y="137.60" width="301.20" height="1.20" fill="#e6e6e6" />
<rect x="397.60" y="137.60" width="1.20" height="249.40" fill="#e2e2e2" />
<path d="M407.8 379.8 H688.4 L698.8 387 H397.6 Z" fill="url(#gb)" />
<path d="M688.4 144.4 L698.8 137.6 V387 L688.4 379.8 Z" fill="url(#gr)" />
<rect x="433.60" y="144.40" width="246.40" height="222.60" fill="#000" />
<line x1="433.60" y1="154.50" x2="680.00" y2="154.50" stroke="#a8a8a8" stroke-width="1" />
<line x1="433.60" y1="162.50" x2="680.00" y2="162.50" stroke="#a8a8a8" stroke-width="1" />
<line x1="433.60" y1="171.50" x2="680.00" y2="171.50" stroke="#a8a8a8" stroke-width="1" />
<line x1="433.60" y1="180.50" x2="680.00" y2="180.50" stroke="#a8a8a8" stroke-width="1" />
<line x1="433.60" y1="189.50" x2="680.00" y2="189.50" stroke="#d0d0d0" stroke-width="1" />
<line x1="433.60" y1="198.50" x2="680.00" y2="198.50" stroke="#a8a8a8" stroke-width="1" />
<line x1="433.60" y1="207.50" x2="680.00" y2="207.50" stroke="#a8a8a8" stroke-width="1" />
<line x1="433.60" y1="216.50" x2="680.00" y2="216.50" stroke="#a8a8a8" stroke-width="1" />
<line x1="433.60" y1="224.50" x2="680.00" y2="224.50" stroke="#a8a8a8" stroke-width="1" />
<line x1="433.60" y1="233.50" x2="680.00" y2="233.50" stroke="#d0d0d0" stroke-width="1" />
<line x1="433.60" y1="242.50" x2="680.00" y2="242.50" stroke="#a8a8a8" stroke-width="1" />
<line x1="433.60" y1="251.50" x2="680.00" y2="251.50" stroke="#a8a8a8" stroke-width="1" />
<line x1="433.60" y1="260.50" x2="680.00" y2="260.50" stroke="#a8a8a8" stroke-width="1" />
<line x1="433.60" y1="269.50" x2="680.00" y2="269.50" stroke="#a8a8a8" stroke-width="1" />
<line x1="433.60" y1="278.50" x2="680.00" y2="278.50" stroke="#d0d0d0" stroke-width="1" />
<line x1="433.60" y1="287.50" x2="680.00" y2="287.50" stroke="#a8a8a8" stroke-width="1" />
<line x1="433.60" y1="296.50" x2="680.00" y2="296.50" stroke="#a8a8a8" stroke-width="1" />
<line x1="433.60" y1="304.50" x2="680.00" y2="304.50" stroke="#a8a8a8" stroke-width="1" />
<line x1="433.60" y1="313.50" x2="680.00" y2="313.50" stroke="#a8a8a8" stroke-width="1" />
<line x1="433.60" y1="322.50" x2="680.00" y2="322.50" stroke="#d0d0d0" stroke-width="1" />
<line x1="433.60" y1="331.50" x2="680.00" y2="331.50" stroke="#a8a8a8" stroke-width="1" />
<line x1="433.60" y1="339.50" x2="680.00" y2="339.50" stroke="#a8a8a8" stroke-width="1" />
<line x1="433.60" y1="348.50" x2="680.00" y2="348.50" stroke="#a8a8a8" stroke-width="1" />
<line x1="433.60" y1="357.50" x2="680.00" y2="357.50" stroke="#a8a8a8" stroke-width="1" />
<line x1="433.60" y1="366.50" x2="680.00" y2="366.50" stroke="#d0d0d0" stroke-width="1" />
<line x1="483.50" y1="144.40" x2="483.50" y2="367.00" stroke="#d4d4d4" stroke-width="1" />
<line x1="532.50" y1="144.40" x2="532.50" y2="367.00" stroke="#d4d4d4" stroke-width="1" />
<line x1="581.50" y1="144.40" x2="581.50" y2="367.00" stroke="#d4d4d4" stroke-width="1" />
<line x1="630.50" y1="144.40" x2="630.50" y2="367.00" stroke="#d4d4d4" stroke-width="1" />
<line x1="434.00" y1="144.40" x2="434.00" y2="367.00" stroke="#8a8a8a" stroke-width="0.8" />
<text x="408.7" y="148.7" font-size="9.8" textLength="17.3" lengthAdjust="spacingAndGlyphs" stroke="#000">50.0</text>
<line x1="428.00" y1="145.40" x2="432.20" y2="145.40" stroke="#111" stroke-width="1" />
<text x="408.7" y="192.8" font-size="9.8" textLength="17.3" lengthAdjust="spacingAndGlyphs" stroke="#000">40.0</text>
<line x1="428.00" y1="189.50" x2="432.20" y2="189.50" stroke="#111" stroke-width="1" />
<text x="408.7" y="236.9" font-size="9.8" textLength="17.3" lengthAdjust="spacingAndGlyphs" stroke="#000">30.0</text>
<line x1="428.00" y1="233.60" x2="432.20" y2="233.60" stroke="#111" stroke-width="1" />
<text x="408.7" y="281.0" font-size="9.8" textLength="17.3" lengthAdjust="spacingAndGlyphs" stroke="#000">20.0</text>
<line x1="428.00" y1="277.70" x2="432.20" y2="277.70" stroke="#111" stroke-width="1" />
<text x="408.7" y="325.1" font-size="9.8" textLength="17.3" lengthAdjust="spacingAndGlyphs" stroke="#000">10.0</text>
<line x1="428.00" y1="321.80" x2="432.20" y2="321.80" stroke="#111" stroke-width="1" />
<text x="413.2" y="369.2" font-size="9.8" textLength="12.8" lengthAdjust="spacingAndGlyphs" stroke="#000">0.0</text>
<line x1="428.00" y1="365.90" x2="432.20" y2="365.90" stroke="#111" stroke-width="1" />
<text x="435.2" y="380.6" font-size="9.8" textLength="5.2" lengthAdjust="spacingAndGlyphs" stroke="#000">0</text>
<text x="667.2" y="380.9" font-size="9.8" textLength="10.6" lengthAdjust="spacingAndGlyphs" stroke="#000">99</text>
<rect x="386.80" y="432.20" width="180.60" height="98.60" fill="#000" opacity="0.18"/>
<rect x="385.20" y="430.60" width="180.40" height="98.60" fill="#fff" stroke="#b8b49a" stroke-width="1"/>
<text x="397.8" y="444.0" font-size="9.5" textLength="107.6" lengthAdjust="spacingAndGlyphs" stroke="#000">Generate Control Callback</text>
<text x="397.8" y="457.7" font-size="9.5" textLength="88.0" lengthAdjust="spacingAndGlyphs" stroke="#000">View Control Callback</text>
<text x="397.8" y="471.8" font-size="9.5" textLength="132.2" lengthAdjust="spacingAndGlyphs" fill="#aca57c" stroke="#aca57c">Generate ActiveX Control Driver</text>
<text x="397.8" y="485.4" font-size="9.5" textLength="129.4" lengthAdjust="spacingAndGlyphs" fill="#aca57c" stroke="#aca57c">Generate Custom Control Code</text>
<line x1="387.00" y1="492.30" x2="563.40" y2="492.30" stroke="#b4ae8c" stroke-width="1" />
<text x="397.8" y="504.0" font-size="9.5" textLength="50.4" lengthAdjust="spacingAndGlyphs" stroke="#000">Control Help</text>
<line x1="387.00" y1="511.30" x2="563.40" y2="511.30" stroke="#b4ae8c" stroke-width="1" />
<text x="397.8" y="522.5" font-size="9.5" textLength="47.9" lengthAdjust="spacingAndGlyphs" stroke="#000">Edit Control</text>
</svg>
<div class="abs" id="bl"></div>
<div class="abs" id="blt"></div>
<div class="abs" id="brt"></div>
<div class="abs" id="brt2"></div>
<div class="abs" id="bl2"></div>
<div class="abs" id="bb"></div>
<div class="abs" id="br"></div>
</body>
</html>
